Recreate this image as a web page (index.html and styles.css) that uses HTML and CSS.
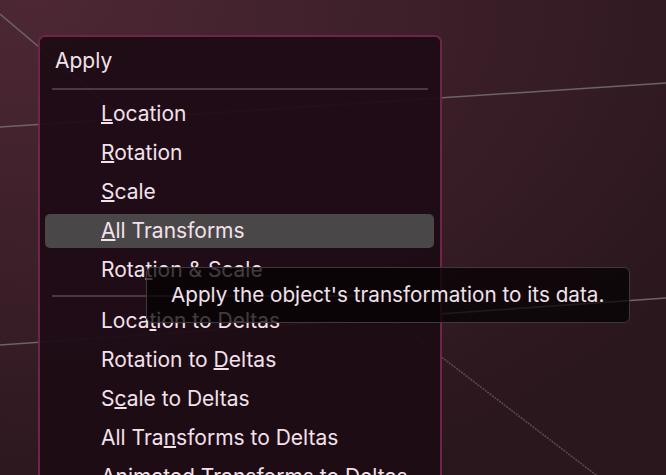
FILE: index.html
```html
<!DOCTYPE html>
<html lang="en">
<head>
    <meta charset="UTF-8">
    <title>Apply</title>
    <link rel="stylesheet" href="styles.css">
</head>
<body>

<div class="viewport">
    <!-- grid lines of the 3D view -->
    <svg class="grid" width="666" height="475" viewBox="0 0 666 475">
        <line x1="0" y1="14" x2="130" y2="124" />
        <line x1="0" y1="127" x2="666" y2="83" />
        <line x1="0" y1="345" x2="666" y2="298" />
        <line x1="380" y1="310" x2="600" y2="478" class="dots" />
    </svg>

    <div class="menu">
        <div class="menu-title">Apply</div>
        <div class="sep"></div>
        <div class="item"><u>L</u>ocation</div>
        <div class="item"><u>R</u>otation</div>
        <div class="item"><u>S</u>cale</div>
        <div class="item active"><u>A</u>ll Transforms</div>
        <div class="item">Rota<u>t</u>ion &amp; Scale</div>
        <div class="sep sep-mid"></div>
        <div class="item">Loca<u>t</u>ion to Deltas</div>
        <div class="item">Rotation to <u>D</u>eltas</div>
        <div class="item">S<u>c</u>ale to Deltas</div>
        <div class="item">All Tra<u>n</u>sforms to Deltas</div>
        <div class="item">Animated Transforms to Deltas</div>
    </div>

    <div class="tooltip">Apply the object's transformation to its data.</div>
</div>

</body>
</html>
```

FILE: styles.css
```css
html, body {
    margin: 0;
    padding: 0;
}
body {
    font-family: Inter, "Noto Sans", sans-serif;
    color: #f3e1eb;
    overflow: hidden;
}
.viewport {
    position: relative;
    width: 666px;
    height: 475px;
    overflow: hidden;
    background: radial-gradient(ellipse 120% 110% at 5% 0%, #4d2734 0%, #3b1f29 50%, #2a161d 100%);
}
.grid {
    position: absolute;
    left: 0;
    top: 0;
}
.grid line {
    stroke: #6d6368;
    stroke-width: 1.6;
}
.grid line.dots {
    stroke: #574a50;
    stroke-dasharray: 2 1;
}
.menu {
    position: absolute;
    left: 38px;
    top: 35px;
    width: 400px;
    height: 460px;
    display: flex;
    flex-direction: column;
    border: 2px solid #6e2547;
    border-radius: 7px;
    background: rgba(30, 12, 21, 0.95);
}
.menu-title {
    flex: none;
    height: 47px;
    line-height: 48px;
    padding-left: 15px;
    font-size: 21px;
}
.sep {
    flex: none;
    height: 2px;
    margin: 4px 12px 5px;
    background: #4a3941;
}
.sep-mid {
    margin: 5px 12px;
}
.item {
    flex: none;
    height: 34px;
    line-height: 34px;
    margin: 2px 6px 3px 5px;
    padding-left: 56px;
    font-size: 21px;
    border-radius: 5px;
    white-space: nowrap;
}
.item u {
    text-decoration-thickness: 2px;
    text-underline-offset: 1px;
}
.item.active {
    background: #4a4748;
}
.tooltip {
    position: absolute;
    left: 146px;
    top: 267px;
    width: 484px;
    height: 56px;
    box-sizing: border-box;
    padding-left: 24px;
    line-height: 53px;
    font-size: 20.7px;
    border: 1.5px solid #3d3a3c;
    border-radius: 6px;
    background: rgba(4, 2, 3, 0.74);
    white-space: nowrap;
}
```
